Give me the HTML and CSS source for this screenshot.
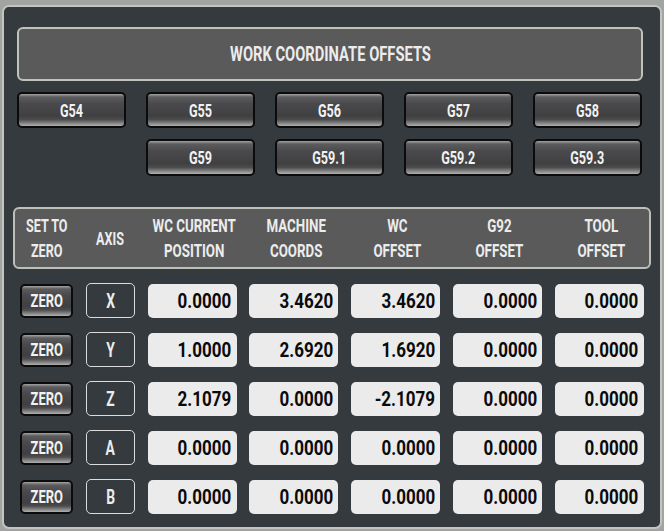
FILE: index.html
```html
<!DOCTYPE html>
<html lang="en">
  <head>
    <meta charset="UTF-8" />
    <meta name="viewport" content="width=device-width, initial-scale=1.0" />
    <title>Work Coordinate Offsets</title>
    <link rel="stylesheet" href="styles.css">
  </head>
  <body>
    <div id="offsets">
      <div class="title"><span class="t">WORK COORDINATE OFFSETS</span></div>

      <div class="systems">
        <button class="btn"><span class="t">G54</span></button>
        <button class="btn"><span class="t">G55</span></button>
        <button class="btn"><span class="t">G56</span></button>
        <button class="btn"><span class="t">G57</span></button>
        <button class="btn"><span class="t">G58</span></button>
        <span></span>
        <button class="btn"><span class="t">G59</span></button>
        <button class="btn"><span class="t">G59.1</span></button>
        <button class="btn"><span class="t">G59.2</span></button>
        <button class="btn"><span class="t">G59.3</span></button>
      </div>

      <div class="head">
        <div class="grid">
          <span class="t">SET TO<br />ZERO</span>
          <span class="t">AXIS</span>
          <span class="t col">WC CURRENT<br />POSITION</span>
          <span class="t col">MACHINE<br />COORDS</span>
          <span class="t col">WC<br />OFFSET</span>
          <span class="t col">G92<br />OFFSET</span>
          <span class="t col">TOOL<br />OFFSET</span>
        </div>
      </div>

      <div class="rows">
        <div class="grid row">
          <button class="btn zero"><span class="t">ZERO</span></button>
          <span class="axis"><span class="t">X</span></span>
          <span class="val"><span class="n">0.0000</span></span>
          <span class="val"><span class="n">3.4620</span></span>
          <span class="val"><span class="n">3.4620</span></span>
          <span class="val"><span class="n">0.0000</span></span>
          <span class="val"><span class="n">0.0000</span></span>
        </div>
        <div class="grid row">
          <button class="btn zero"><span class="t">ZERO</span></button>
          <span class="axis"><span class="t">Y</span></span>
          <span class="val"><span class="n">1.0000</span></span>
          <span class="val"><span class="n">2.6920</span></span>
          <span class="val"><span class="n">1.6920</span></span>
          <span class="val"><span class="n">0.0000</span></span>
          <span class="val"><span class="n">0.0000</span></span>
        </div>
        <div class="grid row">
          <button class="btn zero"><span class="t">ZERO</span></button>
          <span class="axis"><span class="t">Z</span></span>
          <span class="val"><span class="n">2.1079</span></span>
          <span class="val"><span class="n">0.0000</span></span>
          <span class="val"><span class="n">-2.1079</span></span>
          <span class="val"><span class="n">0.0000</span></span>
          <span class="val"><span class="n">0.0000</span></span>
        </div>
        <div class="grid row">
          <button class="btn zero"><span class="t">ZERO</span></button>
          <span class="axis"><span class="t">A</span></span>
          <span class="val"><span class="n">0.0000</span></span>
          <span class="val"><span class="n">0.0000</span></span>
          <span class="val"><span class="n">0.0000</span></span>
          <span class="val"><span class="n">0.0000</span></span>
          <span class="val"><span class="n">0.0000</span></span>
        </div>
        <div class="grid row">
          <button class="btn zero"><span class="t">ZERO</span></button>
          <span class="axis"><span class="t">B</span></span>
          <span class="val"><span class="n">0.0000</span></span>
          <span class="val"><span class="n">0.0000</span></span>
          <span class="val"><span class="n">0.0000</span></span>
          <span class="val"><span class="n">0.0000</span></span>
          <span class="val"><span class="n">0.0000</span></span>
        </div>
      </div>
    </div>
  </body>
</html>
```

FILE: styles.css
```css
body {
  margin: 0;
  padding: 5px 2px 0;
  background-color: #a2a4a2;
  font-family: Roboto, "Liberation Sans", sans-serif;
  font-weight: bold;
}

/* narrow display lettering */
.t {
  display: inline-block;
  white-space: nowrap;
  transform: scaleX(0.7);
}

#offsets {
  box-sizing: border-box;
  width: 660px;
  height: 524px;
  padding: 20px 0 0 13px;
  border: 2px solid #c2c5bf;
  border-radius: 7px;
  background-color: #343a3d;
}

.title {
  box-sizing: border-box;
  width: 626px;
  height: 54px;
  border: 2px solid #c0c3bb;
  border-radius: 6px;
  background-color: #5a5a5a;
  color: #ececec;
  font-size: 21px;
  display: flex;
  justify-content: center;
  align-items: center;
}

.btn {
  box-sizing: border-box;
  border: 2px solid #0b0b0b;
  border-radius: 5px;
  padding: 0;
  color: #f2f2f2;
  font-family: inherit;
  font-weight: bold;
  background: linear-gradient(
    to bottom,
    #a4a4a4 0,
    #5c5b5d 3px,
    #4a494b 30%,
    #403f41 68%,
    #4c4c4c 80%,
    #b0b0b0 100%
  );
  cursor: pointer;
}

.systems {
  display: grid;
  grid-template-columns: repeat(5, 109px);
  grid-template-rows: 36px 37px;
  column-gap: 20px;
  row-gap: 11px;
  margin-top: 11px;
}

.systems .btn {
  font-size: 18px;
}

.head {
  box-sizing: border-box;
  width: 638px;
  height: 62px;
  margin: 31px 0 0 -4px;
  padding-left: 5px;
  border: 2px solid #bdc0b8;
  border-radius: 6px;
  background-color: #5a5a5a;
  color: #ececec;
  font-size: 18px;
  line-height: 25px;
  display: flex;
  align-items: center;
}

.grid {
  display: grid;
  grid-template-columns: 53px 49px repeat(5, 89px);
  column-gap: 12.75px;
  align-items: center;
}

.head .grid span {
  text-align: center;
  justify-self: center;
}

.head .col {
  transform: translateX(2px) scaleX(0.74);
}

.rows {
  margin: 14px 0 0 3px;
  display: flex;
  flex-direction: column;
  gap: 15px;
}

.row {
  height: 34px;
}

.zero {
  height: 34px;
  font-size: 19px;
}

.zero .t {
  transform: scaleX(0.68);
}

.axis {
  box-sizing: border-box;
  height: 35px;
  border: 1px solid #dcdcdc;
  border-radius: 5px;
  color: #ececec;
  font-size: 21px;
  display: flex;
  justify-content: center;
  align-items: center;
}

.axis .t {
  transform: scaleX(0.66);
}

.val {
  box-sizing: border-box;
  height: 34px;
  padding-right: 5px;
  border-radius: 5px;
  background-color: #ebebeb;
  color: #0a0a0a;
  font-size: 20px;
  display: flex;
  justify-content: flex-end;
  align-items: center;
}

.n {
  display: inline-block;
  transform: scaleX(0.85);
  transform-origin: right center;
}
```
